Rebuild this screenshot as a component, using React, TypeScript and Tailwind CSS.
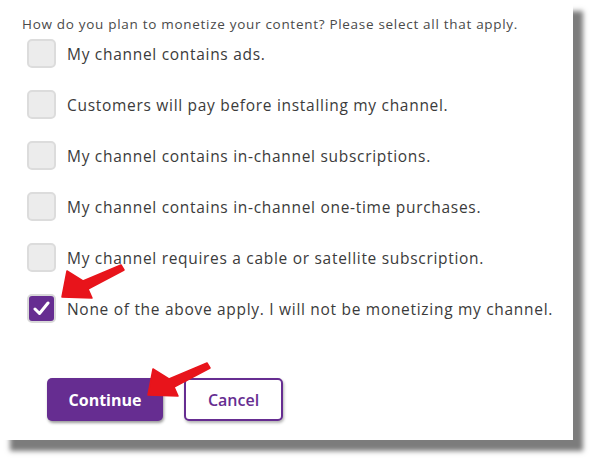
import React from "react";

const options = [
  { label: "My channel contains ads.", checked: false },
  { label: "Customers will pay before installing my channel.", checked: false },
  { label: "My channel contains in-channel subscriptions.", checked: false },
  { label: "My channel contains in-channel one-time purchases.", checked: false },
  { label: "My channel requires a cable or satellite subscription.", checked: false },
  { label: "None of the above apply. I will not be monetizing my channel.", checked: true },
];

function Arrow({ className }: { className: string }) {
  // red callout arrow, tail top-right, head bottom-left
  return (
    <svg className={className} width="70" height="40" viewBox="0 0 70 40">
      <path
        d="M61 1 L64 6 L28 25 L32 34 L2 33 L7 7 L23 17 Z"
        fill="#e8141b"
        stroke="#e8141b"
        strokeWidth="1.5"
        strokeLinejoin="round"
      />
    </svg>
  );
}

export default function App() {
  return (
    <div className="w-[593px] h-[461px] bg-white relative font-['Open_Sans',sans-serif]">
      <div className="w-[573px] h-[440px] bg-white shadow-[10px_11px_5px_#7c7c7c] flex flex-col pl-[22px] pt-[15px]">
        <p className="text-[13.5px] text-[#4a4a4a] leading-[18px] tracking-[0.7px]">
          How do you plan to monetize your content? Please select all that apply.
        </p>

        <div className="flex flex-col gap-[22px] pl-[5px] mt-[6px]">
          {options.map((o) => (
            <div key={o.label} className="flex items-center gap-[11px] h-[29px]">
              {o.checked ? (
                <span className="w-[29px] h-[29px] rounded-[5px] bg-[#662d91] border-2 border-[#d9d9d9] flex items-center justify-center">
                  <svg width="17" height="15" viewBox="0 0 17 15">
                    <path d="M2 8 L6.5 12.5 L15 2" fill="none" stroke="#fff" strokeWidth="3" strokeLinecap="round" strokeLinejoin="round" />
                  </svg>
                </span>
              ) : (
                <span className="w-[29px] h-[29px] rounded-[5px] bg-[#ececec] border-2 border-[#dcdcdc]" />
              )}
              <span className="text-[15.5px] text-[#3b3b3b] tracking-[0.7px] pt-[2px]">{o.label}</span>
            </div>
          ))}
        </div>

        <div className="flex gap-[21px] mt-[55px] pl-[25px]">
          <button className="w-[116px] h-[43px] rounded-[5px] bg-[#662d91] text-white text-[16px] font-bold shadow-[1px_2px_3px_rgba(0,0,0,0.4)]">
            Continue
          </button>
          <button className="w-[99px] h-[43px] rounded-[5px] bg-white border-2 border-[#662d91] text-[#662d91] text-[16px] font-semibold shadow-[1px_2px_3px_rgba(0,0,0,0.3)]">
            Cancel
          </button>
        </div>
      </div>

      <Arrow className="absolute left-[60px] top-[264px]" />
      <Arrow className="absolute left-[146px] top-[362px]" />
    </div>
  );
}
